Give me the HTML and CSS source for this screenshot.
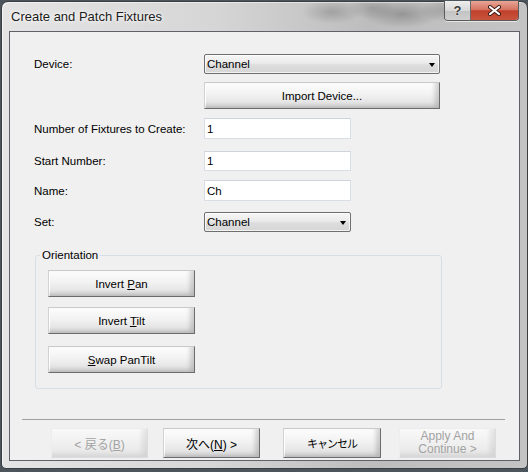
FILE: index.html
```html
<!DOCTYPE html>
<html>
<head>
<meta charset="utf-8">
<link rel="stylesheet" href="styles.css">
</head>
<body>
<div class="window">
  <div class="titlebar">
    <span class="title">Create and Patch Fixtures</span>
    <div class="caption-btns">
      <div class="cbtn help">?</div>
      <div class="cbtn close">
        <svg width="13" height="11" viewBox="0 0 13 11">
          <path d="M2 2 L11 9 M11 2 L2 9" stroke="#3a1a14" stroke-width="4" stroke-linecap="round"/>
          <path d="M2 2 L11 9 M11 2 L2 9" stroke="#ffffff" stroke-width="2.2" stroke-linecap="round"/>
        </svg>
      </div>
    </div>
  </div>
  <div class="client">
    <div class="form">
      <div class="row r-device">
        <span class="label">Device:</span>
        <div class="combo wide"><span>Channel</span><span class="arrow"></span></div>
      </div>
      <div class="row r-import">
        <span class="label"></span>
        <div class="btn import"><span>Import Device...</span></div>
      </div>
      <div class="row r-number">
        <span class="label">Number of Fixtures to Create:</span>
        <div class="textbox">1</div>
      </div>
      <div class="row r-start">
        <span class="label">Start Number:</span>
        <div class="textbox short">1</div>
      </div>
      <div class="row r-name">
        <span class="label">Name:</span>
        <div class="textbox">Ch</div>
      </div>
      <div class="row r-set">
        <span class="label">Set:</span>
        <div class="combo narrow"><span>Channel</span><span class="arrow"></span></div>
      </div>
    </div>
    <fieldset class="group">
      <legend>Orientation</legend>
      <div class="btn orient first"><span>Invert <u>P</u>an</span></div>
      <div class="btn orient second"><span>Invert <u>T</u>ilt</span></div>
      <div class="btn orient third"><span><u>S</u>wap PanTilt</span></div>
    </fieldset>
    <div class="separator"></div>
    <div class="footer">
      <div class="btn fbtn disabled back"><span>&lt; 戻る(<u>B</u>)</span></div>
      <div class="btn fbtn next"><span>次へ(<u>N</u>) &gt;</span></div>
      <div class="btn fbtn cancel"><span class="kana">キャンセル</span></div>
      <div class="btn fbtn disabled apply"><span>Apply And<br>Continue &gt;</span></div>
    </div>
  </div>
</div>
</body>
</html>
```

FILE: styles.css
```css
* { box-sizing: border-box; }

html, body {
  margin: 0;
  padding: 0;
}

body {
  width: 528px;
  height: 472px;
  overflow: hidden;
  background: #4c545c;
  font-family: "Liberation Sans", "Noto Sans CJK JP", sans-serif;
  font-size: 11.5px;
  color: #000;
}

.window {
  margin: 1px 0 0 1px;
  width: 527px;
  height: 468px;
  border: 1px solid #3c3f42;
  border-radius: 7px 7px 5px 5px;
  padding: 0 7px 7px 7px;
  background:
    radial-gradient(ellipse 40px 14px at 400px 12px, rgba(90,90,90,0.4), rgba(90,90,90,0) 100%),
    radial-gradient(ellipse 30px 12px at 330px 10px, rgba(100,100,100,0.35), rgba(100,100,100,0) 100%),
    radial-gradient(ellipse 26px 12px at 445px 8px, rgba(100,100,100,0.35), rgba(100,100,100,0) 100%),
    radial-gradient(ellipse 24px 12px at 370px 6px, rgba(100,100,100,0.3), rgba(100,100,100,0) 100%),
    linear-gradient(to right, #e4e4e4 0%, #d6d6d6 40%, #bdbdbd 70%, #c4c4c4 100%);
  display: flex;
  flex-direction: column;
  box-shadow: inset 1px 1px 0 rgba(255,255,255,0.5);
}

.titlebar {
  height: 29px;
  flex: none;
  display: flex;
  align-items: center;
  justify-content: space-between;
  padding-left: 2px;
}

.title {
  font-family: "Liberation Sans", sans-serif;
  font-size: 13px;
  color: #1c1c1c;
  text-shadow: 0 0 6px #ffffff, 0 0 3px #ffffff;
  padding-bottom: 1px;
}

.caption-btns {
  align-self: flex-start;
  margin-top: -1px;
  margin-right: 1px;
  display: flex;
  height: 20px;
  border: 1px solid #5a5a5a;
  border-top: none;
  border-radius: 0 0 4px 4px;
  overflow: hidden;
  box-shadow: 0 1px 0 rgba(255,255,255,0.6);
}

.cbtn {
  height: 100%;
  display: flex;
  align-items: center;
  justify-content: center;
}

.help {
  width: 26px;
  background: linear-gradient(to bottom, #eeeeee 0%, #d8d8d8 50%, #c2c2c2 51%, #cfcfcf 100%);
  border-right: 1px solid #6a6a6a;
  font-weight: bold;
  font-size: 13px;
  color: #3a3a3a;
  text-shadow: 0 0 2px #fff;
}

.close {
  width: 47px;
  background: linear-gradient(to bottom, #e7a596 0%, #d77462 45%, #c0402c 52%, #c9543e 100%);
}

.client {
  flex: 1;
  background: #f0f0f0;
  border: 1px solid #5e6266;
  display: flex;
  flex-direction: column;
}

.form {
  padding: 22px 0 0 24px;
  display: flex;
  flex-direction: column;
}

.row {
  display: flex;
  align-items: center;
}

.label {
  width: 170px;
  flex: none;
}

.r-import { margin-top: 8px; }
.r-number { margin-top: 9px; }
.r-start { margin-top: 12px; }
.r-name { margin-top: 9px; }
.r-set { margin-top: 11px; }

.combo {
  height: 20px;
  border: 1px solid #6f6f6f;
  border-radius: 2px;
  background: linear-gradient(to bottom, #f6f6f6 0%, #ebebeb 45%, #dddddd 55%, #d6d6d6 100%);
  display: flex;
  align-items: center;
  justify-content: space-between;
  padding: 0 4px 0 2px;
  box-shadow: inset 0 0 0 1px rgba(255,255,255,0.7);
}

.combo.wide { width: 236px; }
.combo.narrow { width: 147px; }

.arrow {
  width: 0;
  height: 0;
  border-left: 3.5px solid transparent;
  border-right: 3.5px solid transparent;
  border-top: 4px solid #000;
  margin-top: 1px;
}

.textbox {
  width: 147px;
  height: 21px;
  background: #ffffff;
  border: 1px solid #d9dee6;
  border-top-color: #cfd4dc;
  padding-left: 2px;
  display: flex;
  align-items: center;
}

.textbox.short { height: 20px; }

.btn {
  display: flex;
  align-items: center;
  justify-content: center;
  text-align: center;
  border: 1px solid;
  border-color: #c9c9c9 #6c6c6c #6c6c6c #d2d2d2;
  background: linear-gradient(to bottom, #fdfdfd 0%, #f2f2f2 45%, #e4e4e4 80%, #d8d8d8 100%);
  box-shadow: inset -4px -2px 4px rgba(0,0,0,0.16), inset 1px 1px 0 #ffffff;
}

.btn u { text-decoration: underline; text-underline-offset: 1px; }

.import {
  width: 236px;
  height: 27px;
}

.group {
  margin: 17px 0 0 25px;
  width: 407px;
  border: 1px solid #d5dfe5;
  border-radius: 3px;
  padding: 0 0 15px 0;
  min-width: 0;
}

.group legend {
  margin-left: 4px;
  padding: 0 2px;
  font-size: 11.5px;
  line-height: 13px;
}

.orient {
  width: 147px;
  height: 27px;
  margin-left: 12px;
}

.orient.first { margin-top: 8px; }
.orient.second { margin-top: 10px; }
.orient.third { margin-top: 12px; }

.separator {
  margin: 30px 14px 0 12px;
  height: 1px;
  background: #a0a0a0;
}

.footer {
  display: flex;
  margin-top: 8px;
  padding-left: 41px;
}

.fbtn {
  width: 97px;
  height: 30px;
  font-size: 12px;
}

.next { margin-left: 15px; }
.cancel { margin-left: 23px; width: 98px; }
.apply { margin-left: 18px; line-height: 13px; }

.kana {
  font-size: 11px;
  letter-spacing: -1px;
}

.disabled {
  color: #a3a3a3;
  border-color: #ececec #dcdcdc #dcdcdc #ececec;
  background: linear-gradient(to bottom, #f9f9f9 0%, #f0f0f0 50%, #e6e6e6 100%);
  box-shadow: inset -5px -3px 5px rgba(0,0,0,0.08);
}
```
